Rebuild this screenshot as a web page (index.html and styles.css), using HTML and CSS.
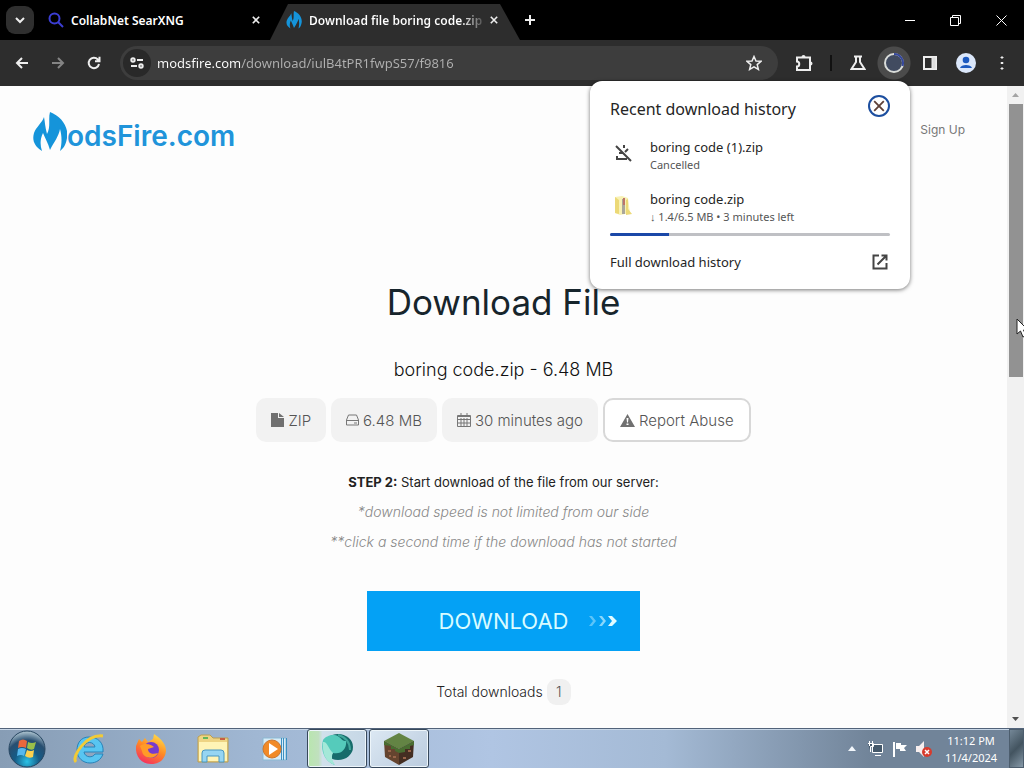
FILE: index.html
```html
<!DOCTYPE html>
<html lang="en">
<head>
<meta charset="utf-8">
<title>Download file boring code.zip</title>
<link rel="stylesheet" href="styles.css">
</head>
<body>
<svg class="defs" aria-hidden="true">
  <symbol id="flame" viewBox="0 0 34 40">
    <path d="M9 39C1 34-1 28 1 21C3 15 9 11 11 5C12 10 12 15 14 22C18 15 15 7 17 0C28 4 36 15 34 26C33 32 31 36 27 39C29 32 29 24 27 17C26 24 21 30 17 38C15 31 12 26 10 21C7 27 7 33 9 39Z"/>
  </symbol>
  <symbol id="cross" viewBox="0 0 10 10"><path d="M1 1L9 9M9 1L1 9"/></symbol>
</svg>
<header class="browser">
  <div class="tabstrip">
    <button class="tab-search" aria-label="Search tabs"><svg width="10" height="7" viewBox="0 0 10 7"><path d="M1 1L5 5L9 1"/></svg></button>
    <div class="tab">
      <svg class="search-icon" width="16" height="16" viewBox="0 0 16 16"><circle cx="6.5" cy="6.5" r="5"/><path d="M10 10L15 15"/></svg>
      <span class="tab-title">CollabNet SearXNG</span>
      <button class="tab-close" aria-label="Close tab"><svg width="8" height="8"><use href="#cross"/></svg></button>
    </div>
    <div class="tab tab-active">
      <svg class="flame" width="16" height="18"><use href="#flame"/></svg>
      <span class="tab-title tab-title-fade">Download file boring code.zip</span>
      <button class="tab-close" aria-label="Close tab"><svg width="8" height="8"><use href="#cross"/></svg></button>
    </div>
    <button class="tab-new" aria-label="New tab"><svg width="12" height="12" viewBox="0 0 12 12"><path d="M6 1V11M1 6H11"/></svg></button>
    <div class="window-buttons">
      <button aria-label="Minimize"><svg width="11" height="11" viewBox="0 0 11 11"><path d="M1 5.5H11"/></svg></button>
      <button aria-label="Restore"><svg width="11" height="11" viewBox="0 0 11 11"><path d="M.5 2.5H8.5V10.5H.5ZM2.5 2.5V.5H10.5V8.5H8.5"/></svg></button>
      <button aria-label="Close"><svg width="11" height="11" viewBox="0 0 11 11"><path d="M.5 .5L10.5 10.5M10.5 .5L.5 10.5"/></svg></button>
    </div>
  </div>
  <div class="toolbar">
    <button class="tool" aria-label="Back"><svg width="14" height="14" viewBox="0 0 14 14"><path d="M13 7H2M7 2L2 7L7 12"/></svg></button>
    <button class="tool tool-dim" aria-label="Forward"><svg width="14" height="14" viewBox="0 0 14 14"><path d="M1 7H12M7 2L12 7L7 12"/></svg></button>
    <button class="tool" aria-label="Reload"><svg width="14" height="14" viewBox="0 0 14 14"><path d="M12 8A5.2 5.2 0 1 1 10.800 3.500L12 5M12.500 .8V5.200H8"/></svg></button>
    <div class="omnibox">
      <button class="site-info" aria-label="Site information"><svg width="14" height="12" viewBox="0 0 14 12"><circle cx="3" cy="3" r="1.700"/><path d="M7 3H13M1 9H7"/><circle cx="11" cy="9" r="1.700"/></svg></button>
      <input class="url" type="text" aria-label="Address" value="modsfire.com/download/iulB4tPR1fwpS57/f9816">
      <button class="tool" aria-label="Bookmark"><svg width="16" height="16" viewBox="0 0 16 16"><path class="thin" d="M8 1.500L10 6L15 6.300L11.200 9.600L12.400 14.400L8 11.800L3.600 14.400L4.800 9.600L1 6.300L6 6Z"/></svg></button>
    </div>
    <button class="tool" aria-label="Extensions"><svg width="18" height="18" viewBox="0 0 18 18"><path d="M2 3.500H15V16H2V12.500C5 12.500 5 7.500 2 7.500Z"/><path class="solid-plain" d="M6.500 3A2 2 0 0 1 10.500 3ZM15.500 7.500A2 2 0 0 1 15.500 11.500Z"/></svg></button>
    <span class="divider"></span>
    <button class="tool" aria-label="Labs"><svg width="16" height="16" viewBox="0 0 16 16"><path d="M4 1.500H12M6 2V7L1.500 14H14.500L10 7V2"/></svg></button>
    <button class="tool tool-round" aria-label="Downloads"><svg width="22" height="22" viewBox="0 0 22 22"><circle cx="11" cy="11" r="9" fill="#414b60" stroke="#d9dcd9"/><path d="M11 2A9 9 0 0 1 19.500 14" stroke="#35479b"/></svg></button>
    <button class="tool" aria-label="Side panel"><svg width="16" height="16" viewBox="0 0 16 16"><rect x="2" y="2" width="12" height="12"/><path class="solid" d="M10 2H14V14H10Z"/></svg></button>
    <button class="tool" aria-label="Profile"><svg width="20" height="20" viewBox="0 0 20 20"><circle cx="10" cy="10" r="10" fill="#dbe7fa" stroke="none"/><circle cx="10" cy="7" r="3.300" fill="#1b59c0" stroke="none"/><path d="M4 15C5 11 15 11 16 15Z" fill="#1b59c0" stroke="none"/></svg></button>
    <button class="tool" aria-label="Menu"><svg width="4" height="16" viewBox="0 0 4 16"><path class="solid" d="M1 2H3V3H1ZM1 7.500H3V8.500H1ZM1 13H3V14H1Z"/></svg></button>
  </div>
  <section class="downloads" aria-label="Recent download history">
    <div class="downloads-head">
      <h2>Recent download history</h2>
      <button class="round-close" aria-label="Close"><svg width="12" height="12"><use href="#cross"/></svg></button>
    </div>
    <div class="download-item">
      <svg width="28" height="24" viewBox="0 0 28 24"><path class="line" d="M6 3L21 18M14 2V5M18 6L15 9M7 13V16H17M9 10H13"/></svg>
      <div><p class="file-name">boring code (1).zip</p><p class="file-state">Cancelled</p></div>
    </div>
    <div class="download-item">
      <svg width="28" height="24" viewBox="0 0 28 24"><path fill="#f8f1b4" d="M5 2L12 1L18 3L20 18L10 20L5 18Z"/><path fill="#ecd977" d="M5 2L9 5V19L5 18ZM16 5L18 4V14L22 19L16 20Z"/><path fill="#aaa69a" d="M12 4H15V19H12Z"/><path fill="#bd7469" d="M13 3H15V10H13Z"/></svg>
      <div><p class="file-name">boring code.zip</p><p class="file-state">↓ 1.4/6.5 MB • 3 minutes left</p></div>
    </div>
    <div class="progress" role="progressbar" aria-label="Download progress" aria-valuenow="21" aria-valuemin="0" aria-valuemax="100"><div class="progress-value" style="width:21%"></div></div>
    <a class="history" href="#"><span>Full download history</span><svg width="20" height="18" viewBox="0 0 20 18"><path class="line" d="M9 2.500H3.500V15.500H16.500V10M11.500 2.500H16.500V7.500M16.500 2.500L7.500 11.500"/></svg></a>
  </section>
</header>
<div class="viewport">
  <div class="page">
    <header class="site-head">
      <a class="brand" href="#"><svg class="flame" width="34" height="40"><use href="#flame"/></svg><span>odsFire.com</span></a>
      <a class="signup" href="#">Sign Up</a>
    </header>
    <main class="content">
      <h1>Download File</h1>
      <p class="file">boring code.zip - 6.48 MB</p>
      <div class="chips">
        <span class="chip"><svg width="13" height="14" viewBox="0 0 13 14"><path class="fill" d="M0 0H7V5H13V14H0ZM8 0L13 4H8Z"/></svg>ZIP</span>
        <span class="chip"><svg width="13" height="12" viewBox="0 0 13 12"><path class="stroke" d="M2.500 1H10.500L12.500 6V11H.5V6ZM.5 6.500H12.500M8 9H11"/></svg>6.48 MB</span>
        <span class="chip"><svg width="14" height="14" viewBox="0 0 14 14"><path class="stroke" d="M.5 2.500H13.500V13.500H.5ZM0 3.500H14M.5 6.500H13.500M.5 10H13.500M4 5V13M7 5V13M10 5V13M4 0V4M10 0V4"/></svg>30 minutes ago</span>
        <button class="chip chip-report"><svg width="15" height="13" viewBox="0 0 15 13"><path class="fill" fill-rule="evenodd" d="M7.500 0L15 13H0ZM6.500 4L7 8.500H8L8.500 4ZM6.500 9.500V11H8.500V9.500Z"/></svg>Report Abuse</button>
      </div>
      <p class="step"><strong>STEP 2:</strong> Start download of the file from our server:</p>
      <p class="note">*download speed is not limited from our side</p>
      <p class="note">**click a second time if the download has not started</p>
      <button class="download"><span>DOWNLOAD</span><svg width="30" height="12" viewBox="0 0 30 12"><path opacity=".4" d="M1 1H4L8 6L4 11H1L5 6Z"/><path opacity=".6" d="M11 1H14L18 6L14 11H11L15 6Z"/><path d="M20 1H24L29 6L24 11H20L24 6Z"/></svg></button>
      <p class="total">Total downloads <span class="count">1</span></p>
    </main>
  </div>
  <div class="scrollbar" aria-hidden="true">
    <svg width="17" height="17" viewBox="0 0 17 17"><path fill="#a3a3a3" d="M8.500 7L12 11H5Z"/></svg>
    <div class="track"><div class="thumb"></div></div>
    <svg width="17" height="17" viewBox="0 0 17 17"><path fill="#505050" d="M8.500 10L12 6H5Z"/></svg>
  </div>
</div>
<footer class="taskbar">
  <button class="start" aria-label="Start"><svg width="38" height="38" viewBox="0 0 38 38"><defs><radialGradient id="orb" cx=".5" cy=".85" r=".85"><stop stop-color="#2bc2e6"/><stop offset=".4" stop-color="#155b86"/><stop offset=".7" stop-color="#284e70"/><stop offset="1" stop-color="#b5cbd6"/></radialGradient></defs><circle cx="19" cy="19" r="18" fill="url(#orb)" stroke="#274661"/><path fill="#e8673d" d="M11 11Q15 8 19 11L18 18Q14 16 10 18Z"/><path fill="#99bf4a" d="M20 12Q24 14 28 12L26 19Q23 21 19 18Z"/><path fill="#55b8ed" d="M10 19Q14 17 18 19L16 26Q13 24 9 26Z"/><path fill="#fbd04e" d="M19 20Q23 22 26 20L25 27Q21 29 17 26Z"/></svg></button>
  <nav class="apps" aria-label="Taskbar">
    <button class="app" aria-label="Internet Explorer"><svg width="34" height="34" viewBox="0 0 34 34"><path fill="#58c5f1" stroke="#2783b9" d="M17 5C9 5 5 11 5 18C5 26 11 31 18 31C24 31 29 28 31 22H23C21 26 13 26 12 20H31C32 11 26 5 17 5ZM12 15C13 9 22 9 23 15Z"/><path fill="none" stroke="#f2cb36" stroke-width="3" d="M4 30C-1 25 14 2 31 4"/></svg></button>
    <button class="app" aria-label="Firefox"><svg width="32" height="32" viewBox="0 0 32 32"><defs><linearGradient id="fox" x1=".8" y1="0" x2=".3" y2="1"><stop stop-color="#ffe04c"/><stop offset=".5" stop-color="#ff8a23"/><stop offset="1" stop-color="#f52e61"/></linearGradient></defs><path fill="url(#fox)" d="M1 13L4 6L7 9L10 5L13 9L18 6L19 1C27 6 31 12 31 18C30 27 24 31 16 31C7 31 0 24 1 13Z"/><circle cx="16" cy="17" r="8" fill="#753bd0"/><path fill="#ff9b27" d="M5 13C10 9 17 12 19 14L13 16C13 20 17 22 23 20C20 27 8 26 7 18Z"/></svg></button>
    <button class="app" aria-label="File Explorer"><svg width="34" height="32" viewBox="0 0 34 32"><path fill="#eed483" stroke="#bb9e51" d="M2 4L5 2H14L17 5H32V29H2Z"/><path fill="#fff4b6" d="M3 9H31V28H3Z"/><path fill="#62b55b" d="M7 4H12V6H7Z"/><path fill="#c85e43" d="M24 5H29V7H24Z"/><path fill="#96d5f2" stroke="#4996c0" d="M6 29V20Q6 17 9 17H25Q28 17 28 20V29H23V23H11V29Z"/></svg></button>
    <button class="app" aria-label="Media Player"><svg width="28" height="26" viewBox="0 0 28 26"><path fill="#d6ecf8" stroke="#8bb9d3" d="M2 2H25V24H2Z"/><path stroke="#3b8fc1" d="M20.500 2V24M22.500 2V24M25.500 2V24"/><circle cx="11" cy="13" r="9" fill="#f18a27" stroke="#ca752e"/><path fill="#fff" d="M8 7L17 13L8 19Z"/></svg></button>
    <button class="app app-open app-green" aria-label="Browser"><svg width="34" height="34" viewBox="0 0 34 34"><ellipse cx="18" cy="15" rx="15" ry="13" fill="#176c6b"/><path fill="#55cbbb" d="M3 8C0 19 5 30 15 33C10 27 11 23 13 21C22 23 27 16 26 9C22 10 20 3 14 3C9 3 5 5 3 8Z"/><path fill="#a4e8d8" d="M3 10C7 9 8 16 13 21C11 24 12 29 15 33C7 30 2 24 3 10Z"/><path fill="none" stroke="#3fa79b" stroke-width="2" d="M18 3C25 5 30 10 30 18"/></svg></button>
    <button class="app app-open" aria-label="Minecraft"><svg width="32" height="34" viewBox="0 0 32 34"><path fill="#638444" d="M1 9L16 1L31 9L16 17Z"/><path fill="#65442f" d="M1 9L16 17V33L2 25Z"/><path fill="#442e22" d="M31 9L16 17V33L30 25Z"/><path fill="#496d31" d="M1 9L16 17L31 9V13L27 14V17L22 17V20L16 21L12 19V17L8 17V14L1 13Z"/><path stroke="#986449" stroke-width="2" d="M5 19H8M10 25H13M20 26H23M25 19H28M6 24H8"/></svg></button>
  </nav>
  <div class="tray">
    <svg width="8" height="5" viewBox="0 0 8 5"><path fill="#f2f7fc" d="M4 0L8 5H0Z"/></svg>
    <svg width="18" height="18" viewBox="0 0 18 18"><path fill="#45596b" stroke="#fff" d="M5.500 4.500H15.500V12.500H5.500ZM8 15.500H14M2.500 1V6M5.500 1V6M1 3.500H6.500V6.500H3.500V12"/></svg>
    <svg width="16" height="18" viewBox="0 0 16 18"><path fill="#fff" d="M1 2H3V17H1ZM4 3H9V5H15L12 8L14 11H8V9H4Z"/></svg>
    <svg width="18" height="18" viewBox="0 0 18 18"><path fill="#f7eeee" d="M1 6H4L9 1V17L4 12H1Z"/><circle cx="12" cy="12" r="5" fill="#d83b2d"/><path stroke="#fff" stroke-width="1.500" d="M10 10L14 14M14 10L10 14"/></svg>
  </div>
  <time class="clock" datetime="2024-11-04T23:12"><span>11:12 PM</span><span>11/4/2024</span></time>
  <button class="show-desktop" aria-label="Show desktop"></button>
</footer>
<svg class="cursor" width="14" height="20" viewBox="0 0 14 20" aria-hidden="true"><path fill="#fff" stroke="#222" d="M1 1V16L4.500 13L7 19L10 17.500L7.500 12H12Z"/></svg>
</body>
</html>
```
FILE: styles.css
```css
* { box-sizing: border-box; }
body { margin: 0; height: 100vh; display: flex; flex-direction: column; overflow: hidden; position: relative; background: #fdfdfd; font-family: "Noto Sans", sans-serif; }
button { border: 0; padding: 0; margin: 0; background: none; font: inherit; color: inherit; display: flex; align-items: center; justify-content: center; }
h1, h2, p { margin: 0; font-weight: 400; }
a { color: inherit; text-decoration: none; }
svg { display: block; flex: none; }
.defs { position: absolute; width: 0; height: 0; }
.flame { fill: #1594da; }

.browser { position: relative; z-index: 2; flex: none; color: #fff; }
.browser button svg { fill: none; stroke: #eee; stroke-width: 2; }
.tabstrip { display: flex; height: 40px; background: #000; font-size: 12px; font-weight: 600; }
.tab-search { width: 28px; height: 28px; margin: 6px 0 0 6px; border-radius: 9px; background: #2f2f2f; }
.tab { display: flex; align-items: center; gap: 7px; width: 236px; padding: 0 9px 0 14px; }
.tab-active { width: 250px; padding: 0 21px 0 16px; background: #2d2d2d; clip-path: polygon(18px 4px, 230px 4px, 250px 100%, 0 100%); }
.search-icon { fill: none; stroke: #3c3ed4; stroke-width: 2; }
.tab-title { flex: 1; min-width: 0; white-space: nowrap; }
.tab-title-fade { color: transparent; background: linear-gradient(90deg, #fff 88%, #555); background-clip: text; }
.tab-close { width: 10px; height: 16px; }
.tab-new { width: 20px; }
.window-buttons { display: flex; margin-left: auto; }
.window-buttons button { width: 46px; }
.browser .window-buttons svg { stroke-width: 1; stroke: #fff; }
.toolbar { display: flex; align-items: center; height: 46px; padding: 0 4px; background: #2d2d2d; }
.tool { width: 36px; height: 36px; flex: none; }
.tool-dim { opacity: .45; }
.browser .thin { stroke-width: 1.500; }
.browser .solid { fill: #ddd; stroke-width: 1; }
.browser .solid-plain { fill: #eee; stroke: none; }
.tool-round { border-radius: 50%; background: radial-gradient(circle, #4b4b4b 16px, transparent 17px); }
.omnibox { flex: 1; display: flex; align-items: center; height: 34px; margin: 0 8px; padding: 0 6px 0 3px; border-radius: 17px; background: #3d3d3d; }
.site-info { width: 28px; height: 28px; border-radius: 50%; background: #292929; }
.url { flex: 1; min-width: 0; border: 0; outline: 0; padding: 0 0 0 6px; font: 13px "Noto Sans", sans-serif; line-height: 20px; color: transparent; background: linear-gradient(90deg, #fff 89px, #b0b0b0 89px); background-clip: text; }
.divider { width: 2px; height: 16px; margin: 0 8px; background: #111; }

.downloads { position: absolute; top: 81px; right: 114px; width: 320px; padding: 14px 20px 17px; border-radius: 12px; background: #fff; box-shadow: 0 1px 4px #0008; color: #252525; }
.downloads-head { display: flex; justify-content: space-between; align-items: flex-start; height: 42px; }
.downloads h2 { font-size: 16px; line-height: 28px; }
.round-close { width: 22px; height: 22px; border: 2px solid #1c4e9f; border-radius: 50%; }
.downloads .round-close svg { stroke: #5d3f36; stroke-width: 1.500; }
.download-item { display: flex; align-items: center; gap: 12px; height: 36px; margin-bottom: 16px; }
.download-item:nth-of-type(3) { margin-bottom: 8px; }
.file-name { font-size: 13px; line-height: 20px; }
.file-state { font-size: 11px; line-height: 16px; color: #555; }
.line { fill: none; stroke: #444; stroke-width: 2; }
.progress { height: 3px; border-radius: 2px; background: #bfc0c4; overflow: hidden; }
.progress-value { height: 100%; background: #1b48a8; }
.history { display: flex; align-items: center; justify-content: space-between; padding-top: 16px; font-size: 13px; line-height: 20px; }

.viewport { flex: 1; min-height: 0; display: flex; font-family: Inter, sans-serif; }
.page { flex: 1; min-width: 0; overflow: hidden; }
.site-head { display: flex; justify-content: space-between; align-items: flex-start; padding: 26px 42px 0 33px; }
.brand { display: flex; align-items: flex-start; color: #2094da; font-size: 28px; line-height: 48px; font-weight: 600; }
.signup { padding-top: 8px; font-size: 12px; line-height: 20px; color: #777; }
.content { display: flex; flex-direction: column; align-items: center; padding-top: 118px; text-align: center; }
.content h1 { font-size: 35px; line-height: 48px; color: #17252c; }
.file { margin-top: 32px; font-size: 18px; line-height: 24px; font-weight: 300; color: #111; }
.chips { display: flex; gap: 5px; margin-top: 16px; }
.chip { display: flex; align-items: center; gap: 4px; height: 44px; padding: 0 15px; border-radius: 10px; background: #f2f2f2; font-size: 15px; font-weight: 300; color: #555; }
.chip-report { background: #fff; border: 2px solid #d8d8d8; }
.fill { fill: #707070; }
.stroke { fill: none; stroke: #777; }
.step { margin-top: 28px; font-size: 13px; line-height: 24px; color: #222; }
.note { margin-top: 6px; font-size: 14px; line-height: 24px; font-style: italic; font-weight: 300; color: #888; }
.download { width: 273px; height: 60px; margin-top: 37px; padding-left: 50px; gap: 20px; background: #04a1f5; color: #d9fbff; font-size: 22px; }
.download svg { fill: #e2fbff; }
.total { display: flex; align-items: center; gap: 4px; margin-top: 28px; font-size: 14px; line-height: 24px; font-weight: 300; color: #222; }
.count { width: 24px; height: 26px; line-height: 26px; border-radius: 9px; background: #f0f0f0; color: #555; }
.scrollbar { width: 17px; flex: none; display: flex; flex-direction: column; background: #f1f1f1; }
.track { flex: 1; padding: 1px 1px 0 2px; }
.thumb { height: 45%; background: #929292; }

.taskbar { flex: none; display: flex; height: 40px; border-top: 1px solid #52637a; background: linear-gradient(90deg, #879db5, #a0b7d3 25%, #b0c5e3 48%, #a4bad5 65%, #718499 85%, #718499); box-shadow: inset 0 1px #c9d8e8; }
.start { width: 54px; }
.apps { display: flex; gap: 2px; margin-left: 5px; }
.app { width: 60px; }
.app-open { border: 1px solid #37485b; border-radius: 3px; background: linear-gradient(135deg, #dce8f3, #bacbde); box-shadow: inset 0 0 0 1px #edf5fa; }
.app-green { background: linear-gradient(90deg, #b8e6ae, #c0e0be 18%, #d0e0eb 25%, #c6d7e6); }
.tray { display: flex; align-items: center; gap: 7px; margin-left: auto; }
.tray svg:first-child { margin-right: 4px; }
.clock { display: flex; flex-direction: column; align-items: center; justify-content: center; width: 76px; font-size: 11px; line-height: 17px; color: #fff; }
.show-desktop { width: 15px; border: 1px solid #4c5d6d; background: linear-gradient(135deg, #748797, #435460 50%, #8699a8); }
.cursor { position: absolute; right: -6px; top: 318px; z-index: 3; }
```
